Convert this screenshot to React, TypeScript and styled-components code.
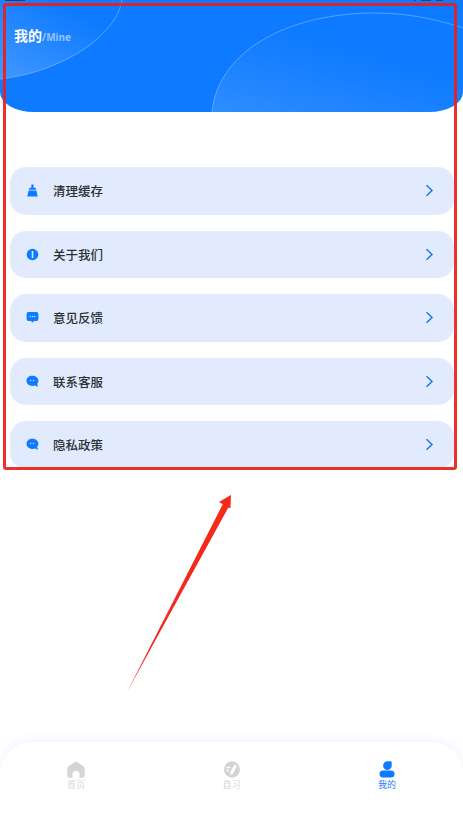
import React from "react";
import styled, { createGlobalStyle } from "styled-components";

const Global = createGlobalStyle`
  html, body { margin: 0; padding: 0; background: #fff; }
  body { font-family: "Noto Sans CJK SC", "Noto Sans", sans-serif; }
`;
const Page = styled.div`
  position: relative; width: 463px; height: 814px; overflow: hidden; background: #fff;
  display: flex; flex-direction: column;
`;
const Header = styled.header`
  position: relative; height: 112px; flex: none; overflow: hidden;
  background: #0d7aff; border-radius: 0 0 34px 34px / 0 0 20px 20px;
  padding: 25px 14px 0; box-sizing: border-box;
`;
const Blob = styled.svg`
  position: absolute; inset: 0; width: 463px; height: 112px;
`;
const Title = styled.div`
  position: relative; display: flex; align-items: baseline; color: #fff;
  font-size: 14px; line-height: 20px; font-weight: 700;
`;
const Sub = styled.span`
  font-size: 10px; font-weight: 700; color: #94c4ff; font-family: "Noto Sans", sans-serif;
`;
const List = styled.main`
  display: flex; flex-direction: column; gap: 16px; padding: 55px 9px 0 10px;
`;
const Row = styled.div`
  height: 47.5px; border-radius: 16px; background: #e1ebfd; display: flex; align-items: center;
  padding: 0 20px 0 16px; box-sizing: border-box;
`;
const IconSlot = styled.span`
  width: 13px; height: 13px; display: flex; margin-right: 14px;
  svg { width: 13px; height: 13px; display: block; }
`;
const Label = styled.span`
  flex: 1; font-size: 12.5px; font-weight: 500; color: #2b2f36;
`;
const Chevron = styled.svg`
  width: 9px; height: 13px;
`;
const Nav = styled.nav`
  position: absolute; left: 0; right: 0; top: 742px; height: 72px; background: #fff;
  border-radius: 32px 32px 0 0; box-shadow: 0 -3px 10px rgba(120,170,255,0.13);
  display: grid; grid-template-columns: 152px 1fr 152px; padding-top: 19px; box-sizing: border-box;
`;
const NavItem = styled.div<{ $active?: boolean }>`
  display: flex; flex-direction: column; align-items: center; gap: 1px;
  color: ${(p) => (p.$active ? "#1c7df5" : "#d6d6d6")};
  font-size: 9px; line-height: 12px;
  svg { width: 18px; height: 17px; display: block; }
`;
const Frame = styled.div`
  position: absolute; left: 3px; top: 3px; width: 454px; height: 467px; box-sizing: border-box;
  border: 3px solid rgba(236,30,25,0.92); border-radius: 3px; pointer-events: none;
`;
const Arrow = styled.svg`
  position: absolute; left: 110px; top: 480px; width: 140px; height: 230px; pointer-events: none;
`;
const StatusBits = styled.svg`
  position: absolute; left: 0; top: 0; width: 463px; height: 3px; pointer-events: none;
`;

const Broom = () => (
  <svg viewBox="0 0 13 13"><path fill="#0d7aff" d="M5.400 0.400h2.200v3.400h2l.6 2H2.900l.6-2h1.900zM2.600 6.600h7.800l1.300 5.800H1.300z" /></svg>
);
const Info = () => (
  <svg viewBox="0 0 13 13"><circle cx="6.500" cy="6.500" r="5.800" fill="#0d7aff" /><rect x="5.700" y="3" width="1.600" height="7" rx=".6" fill="#dfe9fc" /></svg>
);
const Feedback = () => (
  <svg viewBox="0 0 13 13"><path fill="#0d7aff" d="M2.600 1h7.800A2 2 0 0 1 12.400 3v5a2 2 0 0 1-2 2H8l-1.500 1.600L5 10H2.600a2 2 0 0 1-2-2V3a2 2 0 0 1 2-2z" /><g fill="#e1ebfd"><circle cx="4.300" cy="5.500" r=".7" /><circle cx="6.500" cy="5.500" r=".7" /><circle cx="8.700" cy="5.500" r=".7" /></g></svg>
);
const Chat = () => (
  <svg viewBox="0 0 13 13"><path fill="#0d7aff" d="M6.400.8c3.300 0 6 2.200 6 5 0 1.300-.5 2.300-1.200 3.200l.9 2.800-3.300-1.300c-.8.3-1.600.4-2.400.4-3.300 0-5.900-2.200-5.900-5.100S3.100.8 6.400.8z" /><g fill="#e1ebfd"><circle cx="4.700" cy="5.400" r=".7" /><circle cx="7.500" cy="5.400" r=".7" /></g></svg>
);

const items: [string, React.ReactNode][] = [
  ["清理缓存", <Broom />],
  ["关于我们", <Info />],
  ["意见反馈", <Feedback />],
  ["联系客服", <Chat />],
  ["隐私政策", <Chat />],
];

export default function App() {
  return (
    <Page>
      <Global />
      <Header>
        <Blob viewBox="0 0 463 112">
          <defs>
            <linearGradient id="a" x1="0" y1="1" x2="0.7" y2="0.2">
              <stop offset="0" stopColor="#fff" stopOpacity="0.22" />
              <stop offset="1" stopColor="#fff" stopOpacity="0" />
            </linearGradient>
            <linearGradient id="b" x1="0" y1="1" x2="0.5" y2="0.3">
              <stop offset="0" stopColor="#fff" stopOpacity="0.14" />
              <stop offset="1" stopColor="#fff" stopOpacity="0" />
            </linearGradient>
          </defs>
          <path d="M122 0C116 36 62 72 0 79V0z" fill="url(#a)" />
          <path d="M122 0C116 36 62 72 0 79" fill="none" stroke="#fff" strokeOpacity=".3" />
          <path d="M212 112C218 50 290 13 375 13c34 0 64 7 88 15v84z" fill="url(#b)" />
          <path d="M212 112C218 50 290 13 375 13c34 0 64 7 88 15" fill="none" stroke="#fff" strokeOpacity=".3" />
        </Blob>
        <Title>我的<Sub>/Mine</Sub></Title>
      </Header>
      <List>
        {items.map(([t, icon]) => (
          <Row key={t}>
            <IconSlot>{icon}</IconSlot>
            <Label>{t}</Label>
            <Chevron viewBox="0 0 9 13"><path d="M1.500 1.200 7 6.500 1.500 11.800" fill="none" stroke="#1f78e6" strokeWidth="1.500" /></Chevron>
          </Row>
        ))}
      </List>
      <Nav>
        <NavItem>
          <svg viewBox="0 0 18 17"><path fill="#d4d4d4" d="M9 .3 16 5c1.200.8 1.700 1.700 1.700 3v6.500c0 1.300-.9 2.200-2.200 2.200H12.500v-3.500a3.500 3.500 0 0 0-7 0v3.500h-3C1.200 16.700.3 15.800.3 14.500V8c0-1.300.5-2.200 1.700-3z" /></svg>
          首页
        </NavItem>
        <NavItem>
          <svg viewBox="0 0 18 17"><ellipse cx="9" cy="8.500" rx="8" ry="8.200" fill="#d4d4d4" /><path d="M8.500 12 12 5.500" stroke="#fff" strokeWidth="3" strokeLinecap="round" /><path d="M3.500 6.500h4M3.500 9.500h2.500" stroke="#fff" strokeWidth="1.400" /></svg>
          自习
        </NavItem>
        <NavItem $active>
          <svg viewBox="0 0 18 17"><path fill="#0d7aff" d="M9.500.3h3.200a1 1 0 0 1 1 1v3a4.300 4.300 0 1 1-4.200-4z" /><rect x="1.500" y="9.500" width="15" height="7" rx="3.500" fill="#0d7aff" /></svg>
          我的
        </NavItem>
      </Nav>
      <StatusBits viewBox="0 0 463 3">
        <rect x="5" y="0" width="20" height="1" fill="#1b3d70" />
        <rect x="414" y="0" width="2" height="1" fill="#1b3d70" />
        <rect x="421" y="0" width="10" height="1" fill="#1b3d70" />
        <rect x="436" y="0" width="7" height="1" fill="#1b3d70" />
      </StatusBits>
      <Frame />
      <Arrow viewBox="0 0 140 230">
        <path fill="#f5281c" d="M121 15 109 22 112.800 24.200 17 212 118.200 27.800 120.500 28z" />
      </Arrow>
    </Page>
  );
}
